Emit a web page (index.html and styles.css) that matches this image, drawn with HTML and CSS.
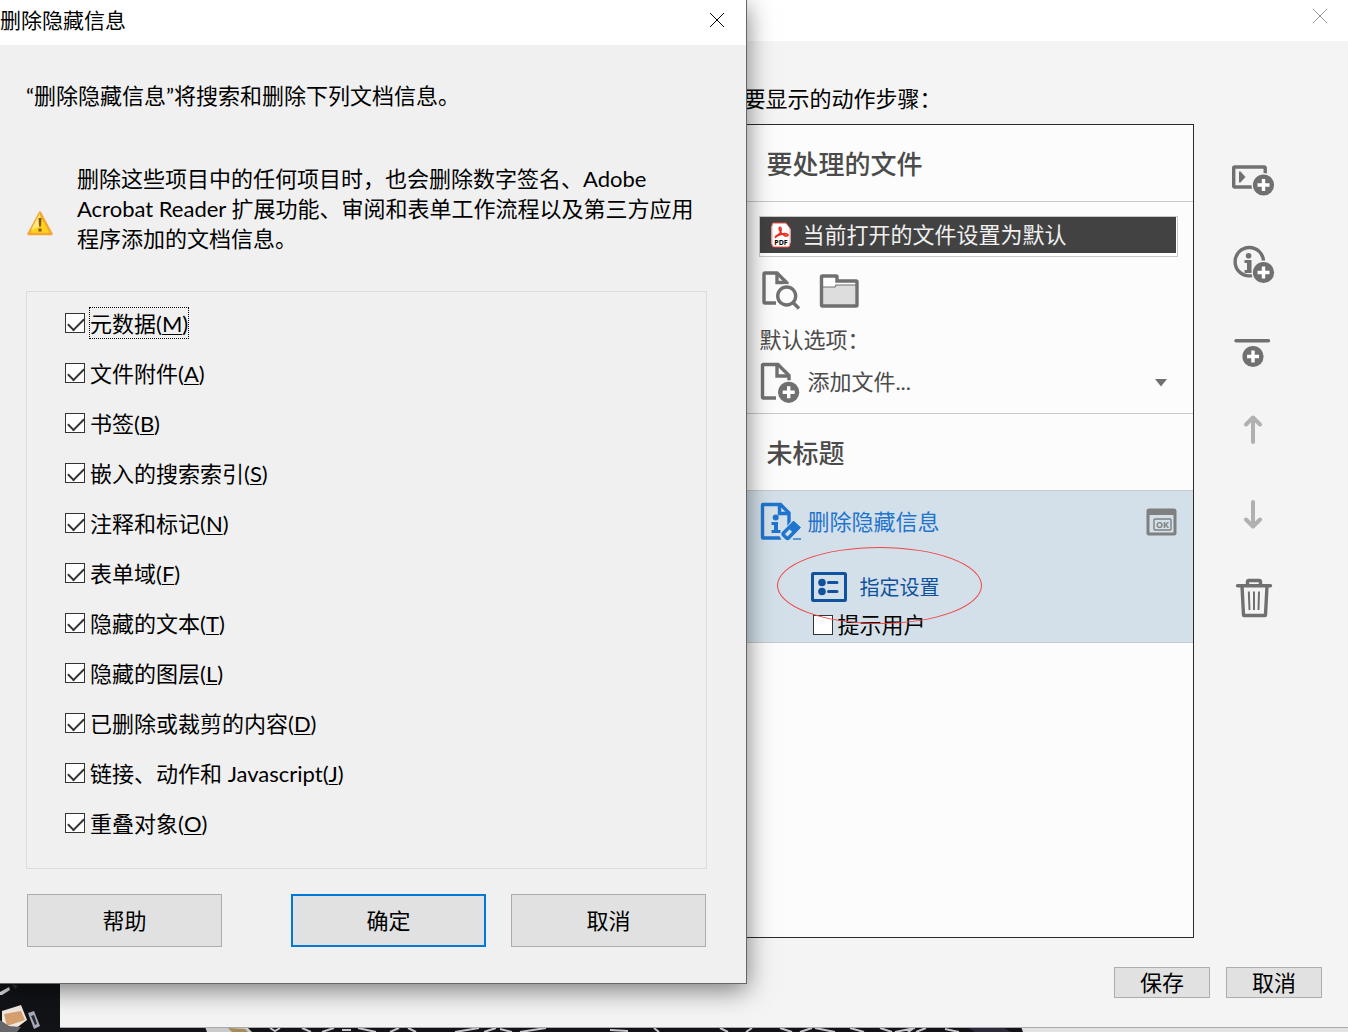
FILE: index.html
```html
<!DOCTYPE html>
<html lang="zh-CN">
<head>
  <meta charset="UTF-8">
  <meta name="viewport" content="width=device-width, initial-scale=1.0">
  <title>删除隐藏信息</title>
  <link rel="stylesheet" href="styles.css">
</head>
<body>

<!-- desktop wallpaper -->
<svg class="wallpaper" viewBox="0 0 1348 48" preserveAspectRatio="xMinYMax slice" aria-hidden="true">
  <rect width="1348" height="48" fill="#e2e2e3"/>
  <path d="M0 0h1005l18 48H0z" fill="#121317"/>
  <path d="M0 8l9-5 1 3-8 5H0z" fill="#d8d8d6"/>
  <path d="M12 0l6 2-3 3z" fill="#35363b"/>
  <path d="M2 27l19-6 6 15-16 12-9-6z" fill="#f1e9df"/>
  <path d="M4 30l17-3 4 9-18 6z" fill="#d6a070"/>
  <path d="M28 29l6-2 6 15-6 3z" fill="#a9acb8"/>
  <path d="M31 32l3-1 3 9-2 1z" fill="#272a38"/>
  <path d="M0 36l9 6 12 1-4 5H0z" fill="#65676c"/>
  <path d="M205 43h42l5 5h-45z" fill="#c9cacc"/>
  <path d="M228 44l17 1 3 3h-16z" fill="#a48c58"/>
  <g fill="none" stroke="#c5c6ca" stroke-width="2">
    <path d="M270 44l5 3 5-3M302 44l9 4M322 48l12-4M342 46h9M358 44l18 4M390 48l9-4M408 44l8 4"/>
    <path d="M455 48l24-4M484 48l12-4M500 45l12 3M520 48l26-4M610 46l18 1M654 44l5 4M720 44l8 4M746 48l6-4M780 44l12 4M800 48l12-4M815 44l20 4"/>
    <path d="M850 44l14 4M880 44l12 4M895 48l20-4M914 44l-6 4M926 44l-10 4M945 45l14 3"/>
  </g>
  <path d="M967 43h36l8 5h-36z" fill="#2b293a"/>
</svg>

<!-- action editor, behind the dialog -->
<main class="window editor">
  <header class="editor-title">
    <button type="button" class="close close-muted" aria-label="关闭">
      <svg width="16" height="16" viewBox="0 0 16 16"><path d="M1 1l14 14M15 1L1 15"/></svg>
    </button>
  </header>

  <div class="editor-body">
    <section class="steps">
      <h2 class="steps-label">要显示的动作步骤：</h2>
      <div class="steps-list">
        <h3 class="section-title">要处理的文件</h3>
        <div class="files">
          <ul class="file-list">
            <li class="file">
              <svg width="20" height="26" viewBox="0 0 20 26" aria-hidden="true">
                <path d="M2 1h13l4 5v17q0 2-2 2H3q-2 0-2-2V3q0-2 1-2z" fill="#fff" stroke="#f04a42"/>
                <path d="M1 4v18M19 7v14" stroke="#fff"/>
                <path d="M5 14c4-1 6-5 5-8-1-2-3 0-1 3 2 5 8 6 8 4s-6-2-11 1c-2 1-2 2-1 1z" fill="none" stroke="#ed2c20" stroke-width="1.6"/>
                <text x="10" y="23" class="pdf-text">PDF</text>
              </svg>
              <span>当前打开的文件设置为默认</span>
            </li>
          </ul>
          <div class="file-buttons">
            <button type="button" class="icon-button" aria-label="添加文件">
              <svg width="42" height="40" viewBox="0 0 42 40">
                <path d="M16 33H5q-1 0-1-1V4q0-1 1-1h12l10 10v6" class="line"/>
                <path d="M17 3v9.500h10" class="line"/>
                <circle cx="26.700" cy="26" r="12" fill="#fcfcfc"/>
                <circle cx="26.700" cy="26" r="9" class="line" fill="none"/>
                <path d="M33 32.500l6 6" class="line"/>
              </svg>
            </button>
            <button type="button" class="icon-button" aria-label="添加文件夹">
              <svg width="42" height="40" viewBox="0 0 42 40">
                <path d="M4 17h13l1-2h21v20H4z" fill="#ddd"/>
                <path d="M4 17h13l1-2h21" fill="none" stroke="#707070" stroke-width="1.200"/>
                <path d="M3.500 7q0-1 1-1H18q1 0 1 1v4h19q1 0 1 1v23q0 1-1 1H4.500q-1 0-1-1z" class="line"/>
              </svg>
            </button>
          </div>
          <label class="option-label" for="addFiles">默认选项：</label>
          <div class="add-files">
            <svg width="40" height="42" viewBox="0 0 40 42" aria-hidden="true">
              <path d="M16 36H3.500q-1 0-1-1V3.500q0-1 1-1H18l11 11V20" class="line"/>
              <path d="M17 2.500V14h12" class="line"/>
              <circle cx="28.700" cy="30.300" r="12" fill="#fcfcfc"/>
              <circle cx="28.700" cy="30.300" r="10.600" fill="#707070"/>
              <path d="M28.700 24.300v12M22.700 30.300h12" stroke="#fff" stroke-width="3.400"/>
            </svg>
            <select id="addFiles"><option>添加文件...</option></select>
            <svg class="arrow" width="12" height="8" viewBox="0 0 12 8" aria-hidden="true"><path d="M0 0h12L6 7.500z" fill="#707070"/></svg>
          </div>
        </div>

        <h3 class="section-title">未标题</h3>
        <div class="step">
          <div class="step-head">
            <svg width="41" height="40" viewBox="0 0 41 40" aria-hidden="true">
              <path d="M3 2.500h17.500L29 11v25H3q-.500 0-.500-.500V3q0-.500.500-.500z" class="blue-line"/>
              <path d="M19.500 3v8.500H29" class="blue-line"/>
              <circle cx="15.700" cy="15.500" r="3" fill="#1f74cd"/>
              <path d="M11.500 20h6.500v8h2.500v3h-9v-3H14v-5h-2.500z" fill="#1f74cd"/>
              <path d="M33.700 16.500l10 9L30 41h-7l-4-8z" fill="#d3e0e9"/>
              <path d="M33.500 21l5 4.500L28.500 36q-1 1-2 0L23.500 33q-1-1 0-2z" class="blue-line"/>
              <path d="M33.500 19l7 6.500-6 6.500-7-6.500z" fill="#1f74cd"/>
              <path d="M33 37h8" stroke="#1f74cd" stroke-width="1.400"/>
            </svg>
            <span class="step-name">删除隐藏信息</span>
            <svg width="31" height="28" viewBox="0 0 31 28" role="img" aria-label="提示">
              <rect x="2" y="2" width="27" height="24" rx="1" fill="none" stroke="#808080" stroke-width="3"/>
              <path d="M2 1h27v6H2z" fill="#808080"/>
              <rect x="8" y="11" width="17" height="11" rx="1" fill="none" stroke="#808080" stroke-width="1.400"/>
              <text x="16.500" y="20" class="ok-text">OK</text>
            </svg>
          </div>
          <div class="step-options">
            <button type="button" class="settings">
              <svg width="36" height="30" viewBox="0 0 36 30" aria-hidden="true">
                <rect x="1.500" y="1.500" width="33" height="27" rx="1" fill="none" stroke="#10529d" stroke-width="3"/>
                <circle cx="11" cy="10.500" r="3.800" fill="#10529d"/>
                <circle cx="11" cy="19.500" r="3.800" fill="#10529d"/>
                <path d="M17.500 10.500H26M17.500 19.500H26" stroke="#10529d" stroke-width="3" stroke-linecap="round"/>
              </svg>
              <span>指定设置</span>
            </button>
            <label class="prompt-user"><input type="checkbox" class="check">提示用户</label>
          </div>
          <div class="red-circle"></div>
        </div>
      </div>
    </section>

    <nav class="tools">
      <button type="button" class="icon-button" aria-label="添加面板">
        <svg width="44" height="44" viewBox="0 0 44 44">
          <rect x="2.700" y="9" width="31.500" height="20" rx="1" class="line"/>
          <path d="M8 13.500h1.500l5 5.500-5 5.500H8z" fill="#707070"/>
          <circle cx="32.500" cy="27" r="12" fill="#f4f4f4"/>
          <circle cx="32.500" cy="27" r="10.600" fill="#707070"/>
          <path d="M32.500 21v12M26.500 27h12" stroke="#fff" stroke-width="3.400"/>
        </svg>
      </button>
      <button type="button" class="icon-button" aria-label="添加说明">
        <svg width="44" height="44" viewBox="0 0 44 44">
          <circle cx="18.300" cy="19.700" r="14.200" class="line"/>
          <circle cx="17.600" cy="13.800" r="2.800" fill="#707070"/>
          <path d="M13.500 18h7v10h2v3h-9v-3H16v-7h-2.500z" fill="#707070"/>
          <circle cx="32.500" cy="30.500" r="12" fill="#f4f4f4"/>
          <circle cx="32.500" cy="30.500" r="10.600" fill="#707070"/>
          <path d="M32.500 24.500v12M26.500 30.500h12" stroke="#fff" stroke-width="3.400"/>
        </svg>
      </button>
      <button type="button" class="icon-button" aria-label="添加分隔线">
        <svg width="44" height="44" viewBox="0 0 44 44">
          <path d="M5 14.700h32.500" class="line" stroke-linecap="round"/>
          <circle cx="22" cy="30.500" r="10.600" fill="#707070"/>
          <path d="M22 24.500v12M16 30.500h12" stroke="#fff" stroke-width="3.400"/>
        </svg>
      </button>
      <button type="button" class="icon-button" aria-label="上移">
        <svg width="44" height="44" viewBox="0 0 44 44"><path d="M22 8v24M15 14.500l7-7 7 7" class="arrow-line"/></svg>
      </button>
      <button type="button" class="icon-button" aria-label="下移">
        <svg width="44" height="44" viewBox="0 0 44 44"><path d="M22 8v24M15 25.500l7 7 7-7" class="arrow-line"/></svg>
      </button>
      <button type="button" class="icon-button" aria-label="删除">
        <svg width="44" height="44" viewBox="0 0 44 44">
          <path d="M6.500 7.700h33" class="line" stroke-linecap="round"/>
          <path d="M16.500 7V4q0-1.500 1.500-1.500h10q1.500 0 1.500 1.500v3" class="line"/>
          <path d="M11 8l1.500 29q0 .500.500.500h21q.500 0 .500-.500L36 8" class="line"/>
          <path d="M17.800 13.500l.700 18.500M23 13.500V32M28 13.500l-.500 18.500" fill="none" stroke="#707070" stroke-width="2"/>
        </svg>
      </button>
    </nav>
  </div>

  <footer class="editor-footer">
    <button type="button" class="button button-small">保存</button>
    <button type="button" class="button button-small">取消</button>
  </footer>
</main>

<!-- dialog -->
<form class="window dialog" role="dialog" aria-labelledby="dialogTitle">
  <header class="dialog-title">
    <h1 id="dialogTitle">删除隐藏信息</h1>
    <button type="button" class="close" aria-label="关闭">
      <svg width="16" height="16" viewBox="0 0 16 16"><path d="M1 1l14 14M15 1L1 15"/></svg>
    </button>
  </header>

  <div class="dialog-body">
    <p class="intro">“删除隐藏信息”将搜索和删除下列文档信息。</p>
    <div class="warning">
      <svg width="28" height="26" viewBox="0 0 28 26" aria-hidden="true">
        <path d="M14 2.500L25.500 24h-23z" fill="#ffd21c" stroke="#f4a72c" stroke-width="2.500" stroke-linejoin="round"/>
        <path d="M14 3L5 20l9-4z" fill="#ffe984"/>
        <path d="M12.500 8h3l-.500 8.500h-2zM12.500 18.500h3v3h-3z" fill="#84560f"/>
      </svg>
      <p>删除这些项目中的任何项目时，也会删除数字签名、Adobe Acrobat Reader 扩展功能、审阅和表单工作流程以及第三方应用程序添加的文档信息。</p>
    </div>

    <fieldset class="options">
      <label class="option focused"><input type="checkbox" class="check" checked><span>元数据(<u>M</u>)</span></label>
      <label class="option"><input type="checkbox" class="check" checked><span>文件附件(<u>A</u>)</span></label>
      <label class="option"><input type="checkbox" class="check" checked><span>书签(<u>B</u>)</span></label>
      <label class="option"><input type="checkbox" class="check" checked><span>嵌入的搜索索引(<u>S</u>)</span></label>
      <label class="option"><input type="checkbox" class="check" checked><span>注释和标记(<u>N</u>)</span></label>
      <label class="option"><input type="checkbox" class="check" checked><span>表单域(<u>F</u>)</span></label>
      <label class="option"><input type="checkbox" class="check" checked><span>隐藏的文本(<u>T</u>)</span></label>
      <label class="option"><input type="checkbox" class="check" checked><span>隐藏的图层(<u>L</u>)</span></label>
      <label class="option"><input type="checkbox" class="check" checked><span>已删除或裁剪的内容(<u>D</u>)</span></label>
      <label class="option"><input type="checkbox" class="check" checked><span>链接、动作和 Javascript(<u>J</u>)</span></label>
      <label class="option"><input type="checkbox" class="check" checked><span>重叠对象(<u>O</u>)</span></label>
    </fieldset>

    <div class="dialog-buttons">
      <button type="button" class="button help">帮助</button>
      <button type="submit" class="button primary">确定</button>
      <button type="button" class="button">取消</button>
    </div>
  </div>
</form>

</body>
</html>
```
FILE: styles.css
```css
* {
  box-sizing: border-box;
}

body {
  position: relative;
  margin: 0;
  height: 100vh;
  overflow: hidden;
  background-color: #121317;
  color: #000;
  font-family: Lato, "Noto Sans CJK SC", sans-serif;
  font-size: 22px;
  line-height: 30px;
}

h1, h2, h3, p, ul {
  margin: 0;
  padding: 0;
  font-weight: normal;
}

button, select {
  padding: 0;
  border: 0;
  background: none;
  color: inherit;
  font: inherit;
}

svg {
  display: block;
  flex: none;
}

.wallpaper {
  position: absolute;
  left: 0;
  bottom: 0;
  width: 100%;
  height: 48px;
}

.window {
  position: absolute;
  display: flex;
  flex-direction: column;
}

.close svg {
  fill: none;
  stroke: #000;
}

.close-muted svg {
  stroke: #999;
}

.button {
  width: 195px;
  height: 53px;
  border: 1px solid #adadad;
  background-color: #e1e1e1;
}

.check {
  appearance: none;
  flex: none;
  width: 20px;
  height: 20px;
  margin: 0;
  border: 1px solid #333;
  background-color: #fff;
}

.check:checked::before {
  content: "";
  display: block;
  width: 14px;
  height: 7px;
  margin: 4px 2px;
  border-left: 2px solid #333;
  border-bottom: 2px solid #333;
  transform: rotate(-45deg);
}

/* editor window */

.editor {
  top: 0;
  left: 60px;
  right: 0;
  bottom: 4px;
  border-bottom: 1px solid #aaa;
  background-color: #f4f4f4;
}

.editor-title {
  display: flex;
  align-items: flex-start;
  justify-content: flex-end;
  height: 41px;
  padding: 8px 20px;
  background-color: #fff;
}

.editor-body {
  flex: 1;
  display: grid;
  grid-template-columns: 3fr 2fr 154px;
}

.steps {
  grid-column: 2;
  display: flex;
  flex-direction: column;
  padding-top: 43px;
}

.steps-label {
  padding-left: 3px;
  height: 40px;
  font-size: 22px;
}

.steps-list {
  flex: 1;
  border: 1px solid #2a2a2a;
  background-color: #fcfcfc;
  color: #4b4b4b;
}

.section-title {
  padding: 24px 25px 22px;
  border-bottom: 1px solid #c8c8c8;
  font-size: 26px;
  font-weight: 500;
}

.files {
  padding: 14px 15px 9px 18px;
  border-bottom: 1px solid #c8c8c8;
}

.file-list {
  padding: 0 1px 3px 0;
  border: 1px solid #c8c8c8;
  background-color: #fff;
  list-style: none;
}

.file {
  display: flex;
  align-items: center;
  gap: 11px;
  height: 36px;
  padding: 0 11px;
  background-color: #424242;
  color: #f0f0f0;
}

.file-buttons {
  display: flex;
  gap: 16px;
  padding: 13px 1px;
}

.icon-button {
  display: block;
}

.icon-button svg {
  overflow: visible;
}

.line {
  fill: none;
  stroke: #707070;
  stroke-width: 3.4;
}

.option-label {
  display: block;
  height: 39px;
  padding-top: 2px;
}

.add-files {
  display: flex;
  align-items: center;
  gap: 7px;
  padding: 0 11px 0 1px;
}

.add-files select {
  flex: 1;
  appearance: none;
  height: 42px;
  padding-bottom: 2px;
}

.step {
  position: relative;
  padding: 11px 16px 2px 19px;
  border-bottom: 1px solid #c8c8c8;
  background-color: #d3e0e9;
}

.step-head {
  display: flex;
  align-items: center;
  gap: 6px;
}

.step-name {
  flex: 1;
  color: #1f74cd;
}

.blue-line {
  fill: none;
  stroke: #1f74cd;
  stroke-width: 3.4;
}

.step-options {
  display: flex;
  flex-direction: column;
  align-items: flex-start;
  gap: 8px;
  padding: 30px 0 0 51px;
}

.settings {
  display: flex;
  align-items: center;
  gap: 12px;
  color: #10529d;
  font-size: 20px;
}

.prompt-user {
  display: flex;
  align-items: center;
  gap: 4px;
  padding-left: 2px;
  color: #000;
}

.red-circle {
  position: absolute;
  top: 56px;
  left: 36px;
  width: 205px;
  height: 77px;
  border: 1px solid #f04848;
  border-radius: 50%;
  pointer-events: none;
}

.pdf-text, .ok-text {
  font-family: "Open Sans", sans-serif;
  font-weight: bold;
  text-anchor: middle;
}

.pdf-text {
  font-size: 7px;
}

.ok-text {
  fill: #808080;
  font-size: 9px;
}

.tools {
  display: flex;
  flex-direction: column;
  align-items: flex-start;
  gap: 40px;
  padding: 117px 0 0 37px;
}

.arrow-line {
  fill: none;
  stroke: #b0b0b0;
  stroke-width: 4;
  stroke-linecap: round;
  stroke-linejoin: round;
}

.editor-footer {
  display: flex;
  justify-content: flex-end;
  gap: 16px;
  padding: 29px 26px;
}

.button-small {
  width: 96px;
  height: 31px;
}

/* dialog window */

.dialog {
  top: 0;
  left: 0;
  right: 601px;
  border-right: 1px solid #666;
  border-bottom: 1px solid #666;
  background-color: #f0f0f0;
  box-shadow: 0 6px 24px rgba(0, 0, 0, 0.5);
}

.dialog-title {
  display: flex;
  align-items: center;
  justify-content: space-between;
  height: 45px;
  padding: 0 21px 6px 0;
  background-color: #fff;
}

.dialog-title h1 {
  font-size: 21px;
}

.dialog-body {
  padding: 36px 39px 36px 26px;
}

.warning {
  display: flex;
  align-items: flex-end;
  gap: 23px;
  margin: 53px 0 37px;
}

.warning svg {
  margin-bottom: 18px;
}

.warning p {
  flex: 1;
}

.options {
  margin: 0;
  padding: 6px 38px 20px;
  border: 1px solid #dcdcdc;
}

.option {
  display: flex;
  align-items: center;
  gap: 4px;
  height: 50px;
}

.option span {
  padding-top: 2px;
  border: 1px solid transparent;
  line-height: 28px;
}

.option u {
  text-underline-offset: 2px;
  text-decoration-thickness: 1px;
}

.focused span {
  border: 1px dotted #000;
}

.dialog-buttons {
  display: flex;
  gap: 25px;
  padding: 25px 1px 0;
}

.dialog-buttons .help {
  margin-right: auto;
}

.primary {
  border: 2px solid #0078d7;
}
```
